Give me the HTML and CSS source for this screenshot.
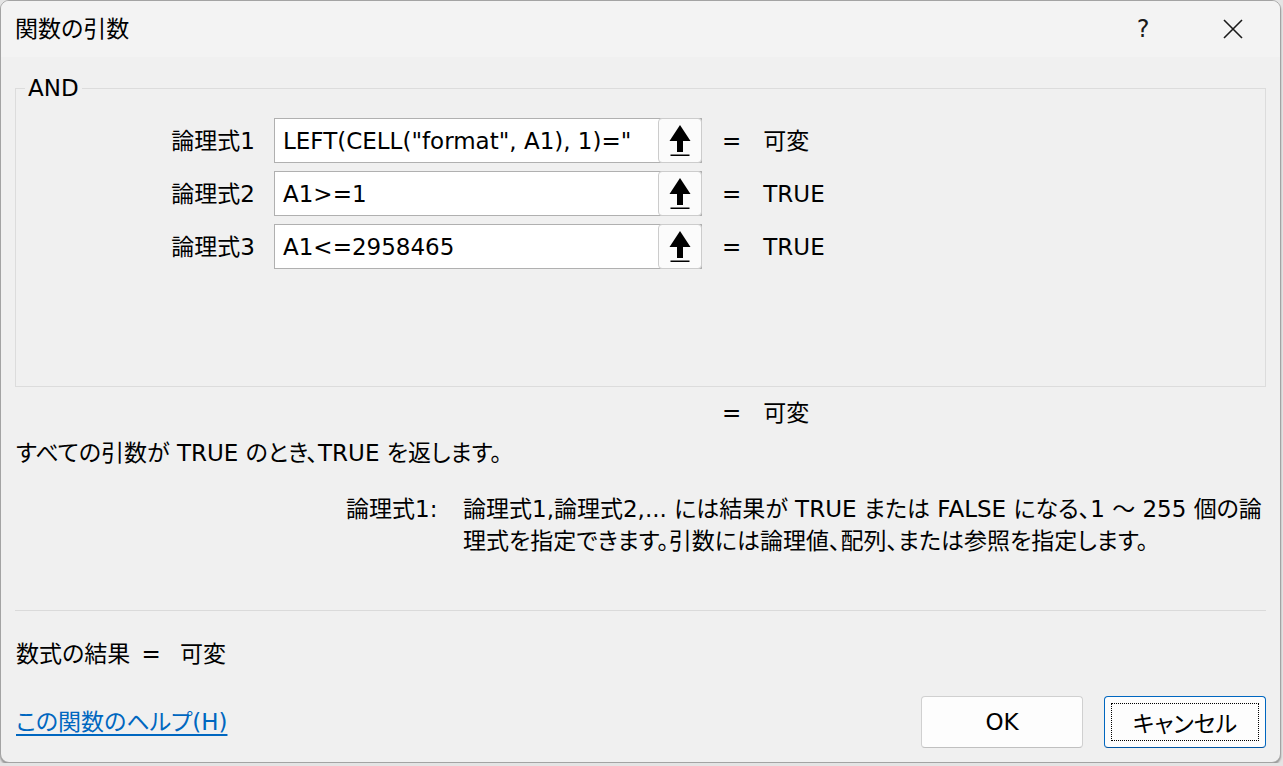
FILE: index.html
```html
<!DOCTYPE html>
<html lang="ja">
<head>
  <meta charset="UTF-8">
  <title>関数の引数</title>
  <link rel="stylesheet" href="styles.css">
</head>
<body>
<div class="dialog">
  <div class="titlebar">
    <span class="title">関数の引数</span>
    <div class="caption">
      <span class="cap-btn help">?</span>
      <span class="cap-btn close">
        <svg width="20" height="20" viewBox="0 0 20 20"><path d="M1 1 L19 19 M19 1 L1 19" stroke="#1a1a1a" stroke-width="1.6" fill="none"/></svg>
      </span>
    </div>
  </div>

  <div class="content">
    <fieldset class="group">
      <legend>AND</legend>
      <div class="args">
        <label class="arg-name">論理式1</label>
        <div class="arg-box"><span class="arg-text">LEFT(CELL("format", A1), 1)="</span><span class="ref-btn"><svg width="22" height="31" viewBox="0 0 22 31"><path d="M11 0 L21.5 16 L14 16 L14 27 L8 27 L8 16 L0.5 16 Z" fill="#000"/><rect x="1.5" y="29.5" width="19" height="1.5" fill="#000"/></svg></span></div>
        <span class="eq">=</span>
        <span class="arg-val">可変</span>

        <label class="arg-name">論理式2</label>
        <div class="arg-box"><span class="arg-text">A1&gt;=1</span><span class="ref-btn"><svg width="22" height="31" viewBox="0 0 22 31"><path d="M11 0 L21.5 16 L14 16 L14 27 L8 27 L8 16 L0.5 16 Z" fill="#000"/><rect x="1.5" y="29.5" width="19" height="1.5" fill="#000"/></svg></span></div>
        <span class="eq">=</span>
        <span class="arg-val">TRUE</span>

        <label class="arg-name">論理式3</label>
        <div class="arg-box"><span class="arg-text">A1&lt;=2958465</span><span class="ref-btn"><svg width="22" height="31" viewBox="0 0 22 31"><path d="M11 0 L21.5 16 L14 16 L14 27 L8 27 L8 16 L0.5 16 Z" fill="#000"/><rect x="1.5" y="29.5" width="19" height="1.5" fill="#000"/></svg></span></div>
        <span class="eq">=</span>
        <span class="arg-val">TRUE</span>
      </div>
    </fieldset>

    <div class="func-result"><span class="eq">=</span><span>可変</span></div>

    <p class="func-desc">すべての引数が TRUE のとき、TRUE を返します。</p>

    <div class="arg-help">
      <span class="help-name">論理式1:</span>
      <p class="help-text">論理式1,論理式2,... には結果が TRUE または FALSE になる、1 ～ 255 個の論<br>理式を指定できます。引数には論理値、配列、または参照を指定します。</p>
    </div>

    <div class="separator"></div>

    <div class="formula-result">数式の結果 <span class="res-eq">=</span> <span>可変</span></div>

    <div class="footer">
      <a class="help-link" href="#">この関数のヘルプ(H)</a>
      <div class="buttons">
        <button class="btn">OK</button>
        <button class="btn btn-default"><span class="focus">キャンセル</span></button>
      </div>
    </div>
  </div>
</div>
</body>
</html>
```

FILE: styles.css
```css
* {
  margin: 0;
  padding: 0;
  box-sizing: border-box;
}

body {
  background: #e4e4e4;
  font-family: "DejaVu Sans", "Noto Sans CJK JP", sans-serif;
  font-size: 23px;
  line-height: 32px;
  color: #000;
  font-feature-settings: "palt";
}

.dialog {
  width: 1281px;
  height: 763px;
  background: #f0f0f0;
  border: 1px solid #a3a3a3;
  border-radius: 9px;
  box-shadow: 0 2px 2px rgba(0, 0, 0, 0.35);
  overflow: hidden;
}

.titlebar {
  height: 56px;
  background: #f3f3f3;
  display: flex;
  align-items: center;
  justify-content: space-between;
  padding-left: 14px;
}

.title {
  font-size: 23px;
}

.caption {
  display: flex;
  height: 100%;
  padding-right: 2px;
}

.cap-btn {
  width: 90px;
  display: flex;
  align-items: center;
  justify-content: center;
}

.help {
  font-size: 24px;
  color: #1a1a1a;
}

.content {
  padding: 0 14px 0 14px;
}

/* 引数グループ */
.group {
  margin-top: 15px;
  height: 315px;
  border: 1px solid #dcdcdc;
  padding: 14px 0 0 0;
}

.group legend {
  margin-left: 9px;
  padding: 0 3px;
  font-size: 23px;
  line-height: 32px;
}

.args {
  display: grid;
  grid-template-columns: 258px 428px auto 1fr;
  grid-auto-rows: 45px;
  row-gap: 8px;
  align-items: center;
}

.arg-name {
  text-align: right;
  padding-right: 19px;
}

.arg-box {
  height: 45px;
  background: #fff;
  border: 1px solid #b0b0b0;
  display: flex;
  align-items: center;
}

.arg-text {
  flex: 1;
  padding-left: 8px;
  white-space: nowrap;
  overflow: hidden;
}

.ref-btn {
  width: 44px;
  height: 45px;
  margin: -1px -1px -1px 0;
  background: #fbfbfb;
  border: 1px solid #cccccc;
  border-radius: 4px;
  display: flex;
  align-items: center;
  justify-content: center;
}

.args .eq {
  padding-left: 20px;
}

.arg-val {
  padding-left: 22px;
}

.func-result {
  margin-top: 10px;
  padding-left: 707px;
  display: flex;
  gap: 22px;
}

.func-desc {
  margin-top: 8px;
  padding-left: 1px;
}

/* 引数の説明 */
.arg-help {
  margin-top: 24px;
  padding-left: 331px;
  display: flex;
}

.help-name {
  width: 117px;
  flex: none;
}

.help-text {
  white-space: nowrap;
}

.separator {
  margin-top: 53px;
  border-top: 1px solid #dadada;
}

.formula-result {
  margin-top: 27px;
  padding-left: 1px;
}

.res-eq {
  margin: 0 12px 0 4px;
}

.footer {
  margin-top: 26px;
  display: flex;
  align-items: center;
  justify-content: space-between;
}

.help-link {
  color: #0067c0;
  text-decoration: underline;
  text-underline-offset: 4px;
  padding-left: 1px;
}

.buttons {
  display: flex;
  gap: 21px;
}

.btn {
  width: 162px;
  height: 52px;
  background: #fdfdfd;
  border: 1px solid #d0d0d0;
  border-bottom-color: #c0c0c0;
  border-radius: 4px;
  font-family: "DejaVu Sans", "Noto Sans CJK JP", sans-serif;
  font-size: 23px;
  color: #000;
  font-feature-settings: "palt";
}

.btn-default {
  border: 1px solid #0067c0;
  border-bottom-color: #0054a0;
  padding: 6px;
  display: flex;
}

.focus {
  flex: 1;
  border: 1px dotted #000;
  display: flex;
  align-items: center;
  justify-content: center;
}
```
